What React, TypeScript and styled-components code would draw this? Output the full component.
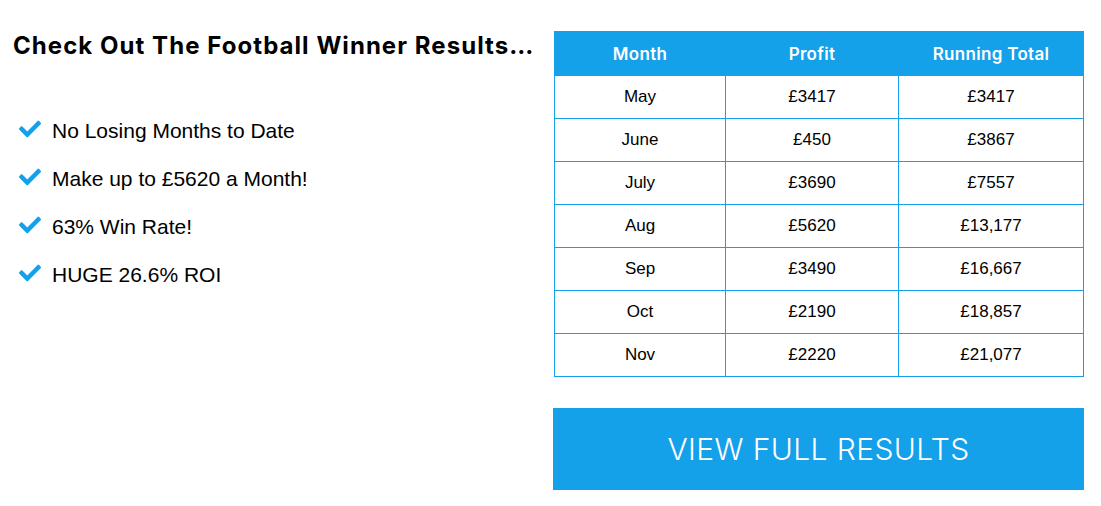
import React from "react";
import styled, { createGlobalStyle } from "styled-components";
import { FaCheck } from "react-icons/fa";

const BLUE = "#15a0ea";

const Global = createGlobalStyle`
  html, body { margin: 0; padding: 0; background: #fff; }
  body { font-family: "Liberation Sans", Arial, sans-serif; color: #000; }
`;

const Page = styled.div`
  display: flex;
  width: 1101px;
  height: 506px;
  box-sizing: border-box;
`;

const Left = styled.div`
  width: 553px;
  box-sizing: border-box;
  padding: 30px 0 0 13px;
`;

const Heading = styled.h2`
  margin: 0;
  font-family: Inter, "Open Sans", sans-serif;
  font-weight: 700;
  font-size: 24px;
  line-height: 32px;
  letter-spacing: 1.05px;
  white-space: nowrap;
`;

const List = styled.ul`
  list-style: none;
  margin: 57px 0 0 0;
  padding: 0 0 0 6px;
  display: flex;
  flex-direction: column;
  gap: 24px;
`;

const Item = styled.li`
  display: flex;
  align-items: center;
  gap: 11px;
  font-size: 21px;
  line-height: 24px;
`;

const Check = styled(FaCheck)`
  color: ${BLUE};
  width: 22px;
  height: 22px;
  flex: none;
  margin-top: -4px;
`;

const Right = styled.div`
  width: 531px;
  padding-top: 31px;
  display: flex;
  flex-direction: column;
  gap: 31px;
`;

const Table = styled.table`
  border-collapse: collapse;
  margin-left: 1px;
  table-layout: fixed;
`;

const Th = styled.th<{ $w: number }>`
  width: ${(p) => p.$w}px;
  height: 43px;
  padding: 0;
  background: ${BLUE};
  color: #fff;
  font-family: Inter, "Open Sans", sans-serif;
  font-weight: 600;
  font-size: 17px;
  letter-spacing: 0.3px;
  border: 1px solid ${BLUE};
`;

const Td = styled.td`
  height: 42px;
  padding: 0;
  text-align: center;
  font-size: 17px;
  border: 1px solid ${BLUE};
`;

const Button = styled.a`
  display: flex;
  align-items: center;
  justify-content: center;
  height: 82px;
  background: ${BLUE};
  color: #fff;
  font-family: Inter, "Open Sans", sans-serif;
  font-weight: 300;
  font-size: 30px;
  letter-spacing: 0.4px;
  text-decoration: none;
  box-sizing: border-box;
`;

const rows = [
  ["May", "£3417", "£3417"],
  ["June", "£450", "£3867"],
  ["July", "£3690", "£7557"],
  ["Aug", "£5620", "£13,177"],
  ["Sep", "£3490", "£16,667"],
  ["Oct", "£2190", "£18,857"],
  ["Nov", "£2220", "£21,077"],
];

const items = [
  "No Losing Months to Date",
  "Make up to £5620 a Month!",
  "63% Win Rate!",
  "HUGE 26.6% ROI",
];

export default function App() {
  return (
    <>
      <Global />
      <Page>
        <Left>
          <Heading>Check Out The Football Winner Results…</Heading>
          <List>
            {items.map((t) => (
              <Item key={t}>
                <Check />
                {t}
              </Item>
            ))}
          </List>
        </Left>
        <Right>
          <Table>
            <thead>
              <tr>
                <Th $w={170}>Month</Th>
                <Th $w={172}>Profit</Th>
                <Th $w={184}>Running Total</Th>
              </tr>
            </thead>
            <tbody>
              {rows.map((r) => (
                <tr key={r[0]}>
                  {r.map((c, i) => (
                    <Td key={i}>{c}</Td>
                  ))}
                </tr>
              ))}
            </tbody>
          </Table>
          <Button href="#">VIEW FULL RESULTS</Button>
        </Right>
      </Page>
    </>
  );
}
